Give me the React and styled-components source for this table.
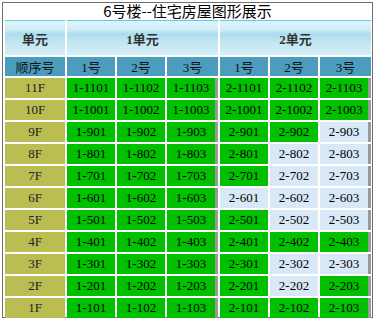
import styled, { createGlobalStyle } from "styled-components";

const GlobalStyle = createGlobalStyle`
    body{
        margin: 0;
        background: #fff;
        font-family: "Liberation Serif", "Noto Sans CJK SC", serif;
    }
`;

const floors = [11, 10, 9, 8, 7, 6, 5, 4, 3, 2, 1];
const sold = ["2-903", "2-802", "2-803", "2-702", "2-703", "2-601", "2-602", "2-603", "2-502", "2-503", "2-302", "2-303", "2-202"];
const widths = [60, 48, 48, 51, 48, 48, 51];

export default function App(){
    return(
        <>
            <GlobalStyle />
            <Box>
                <Title>6号楼--住宅房屋图形展示</Title>
                <Table>
                    <colgroup>
                        {widths.map((w, i) => <Col key={i} $w={w} />)}
                    </colgroup>
                    <thead>
                        <tr>
                            <UnitHead>单元</UnitHead>
                            <UnitHead colSpan={3}>1单元</UnitHead>
                            <UnitHead colSpan={3}>2单元</UnitHead>
                        </tr>
                        <tr>
                            <NoHead>顺序号</NoHead>
                            {[1, 2].map((u) => (
                                [1, 2, 3].map((n) => <NoHead key={`${u}-${n}`}>{n}号</NoHead>)
                            ))}
                        </tr>
                    </thead>
                    <tbody>
                        {floors.map((f) => (
                            <tr key={f}>
                                <Floor>{f}F</Floor>
                                {[1, 2].map((u) => (
                                    [1, 2, 3].map((n) => {
                                        const name = `${u}-${f}0${n}`;
                                        return (
                                            <Room key={name} $sold={sold.includes(name)} $last={n === 3}>
                                                {name}
                                            </Room>
                                        );
                                    })
                                ))}
                            </tr>
                        ))}
                    </tbody>
                </Table>
            </Box>
        </>
    );
}

const Box = styled.div`
    margin: 2px 0 0 2px;
    width: 369px;
    height: 314px;
    border: 1px solid #6f6f6f;
`

const Title = styled.div`
    height: 15px;
    line-height: 15px;
    text-align: center;
    font-family: "Noto Sans CJK SC", sans-serif;
    font-size: 15px;
    color: #000;
`

const Table = styled.table`
    border-collapse: separate;
    border-spacing: 2px;
    table-layout: fixed;
    width: 370px;
    td, th{
        padding: 0;
        text-align: center;
        font-size: 13px;
    }
`

const Col = styled.col`
    width: ${(p) => p.$w}px;
`

const UnitHead = styled.th`
    height: 34px;
    border-top: 1px solid #62c9e3;
    background: linear-gradient(#e0f4fa 0%, #cdecf6 26%, #aadced 38%, #c2e6f2 62%, #d6f0f8 100%);
    color: #333;
    font-weight: bold;
`

const NoHead = styled.th`
    height: 19px;
    background-color: #4b9cbd;
    color: #111;
    font-weight: normal;
`

const Floor = styled.td`
    height: 20px;
    background-color: #b9bd52;
    color: #222;
`

const Room = styled.td`
    height: 20px;
    background-color: ${(p) => (p.$sold ? "#d8e8f6" : "#00c000")};
    color: #000;
    border-right: ${(p) => (p.$last ? "3px solid #999" : "none")};
`
